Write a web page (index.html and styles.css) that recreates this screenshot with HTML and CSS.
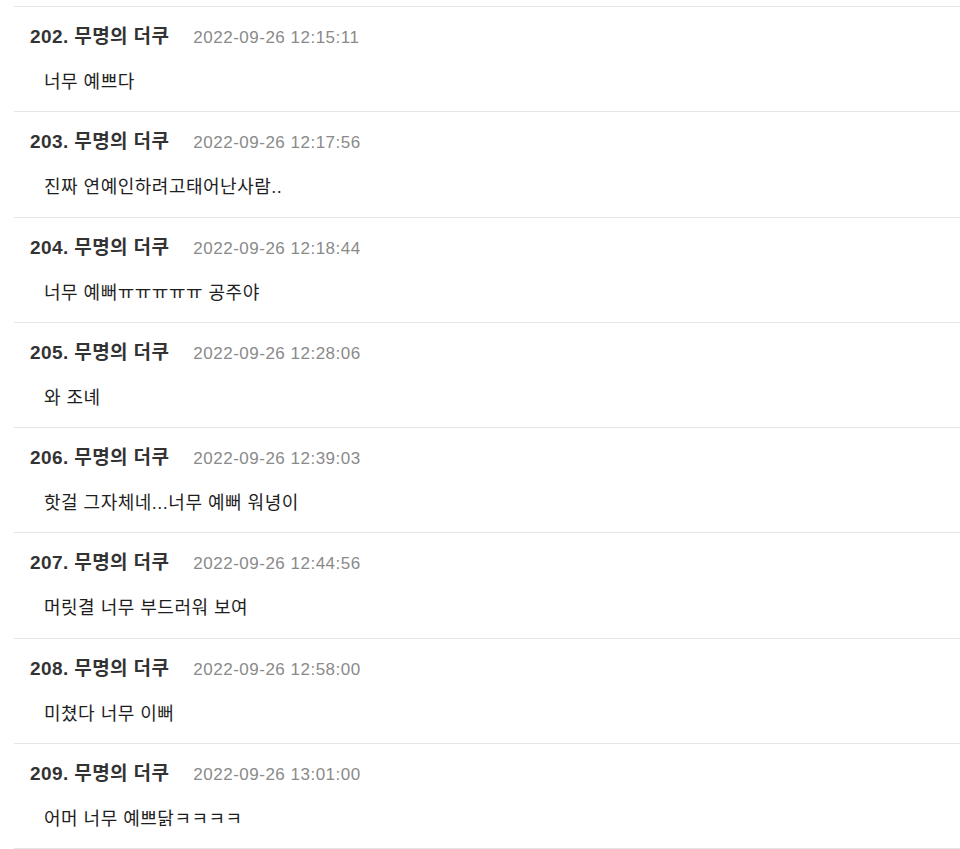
FILE: index.html
```html
<!DOCTYPE html>
<html lang="ko">
<head>
<meta charset="utf-8">
<link rel="stylesheet" href="styles.css">
</head>
<body>
<ul class="comments">
  <li class="comment">
    <div class="meta"><span class="author">202. 무명의 더쿠</span><span class="date">2022-09-26 12:15:11</span></div>
    <p class="text">너무 예쁘다</p>
  </li>
  <li class="comment">
    <div class="meta"><span class="author">203. 무명의 더쿠</span><span class="date">2022-09-26 12:17:56</span></div>
    <p class="text">진짜 연예인하려고태어난사람..</p>
  </li>
  <li class="comment">
    <div class="meta"><span class="author">204. 무명의 더쿠</span><span class="date">2022-09-26 12:18:44</span></div>
    <p class="text">너무 예뻐ㅠㅠㅠㅠㅠ 공주야</p>
  </li>
  <li class="comment">
    <div class="meta"><span class="author">205. 무명의 더쿠</span><span class="date">2022-09-26 12:28:06</span></div>
    <p class="text">와 조녜</p>
  </li>
  <li class="comment">
    <div class="meta"><span class="author">206. 무명의 더쿠</span><span class="date">2022-09-26 12:39:03</span></div>
    <p class="text">핫걸 그자체네...너무 예뻐 워녕이</p>
  </li>
  <li class="comment">
    <div class="meta"><span class="author">207. 무명의 더쿠</span><span class="date">2022-09-26 12:44:56</span></div>
    <p class="text">머릿결 너무 부드러워 보여</p>
  </li>
  <li class="comment">
    <div class="meta"><span class="author">208. 무명의 더쿠</span><span class="date">2022-09-26 12:58:00</span></div>
    <p class="text">미쳤다 너무 이뻐</p>
  </li>
  <li class="comment">
    <div class="meta"><span class="author">209. 무명의 더쿠</span><span class="date">2022-09-26 13:01:00</span></div>
    <p class="text">어머 너무 예쁘닭ㅋㅋㅋㅋ</p>
  </li>
</ul>
</body>
</html>
```
FILE: styles.css
```css
html, body {
  margin: 0;
  padding: 0;
  background: #ffffff;
}
body {
  font-family: "Liberation Sans", "Noto Sans CJK KR", sans-serif;
  color: #222222;
}
.comments {
  list-style: none;
  margin: 6px 0 0 14px;
  padding: 0;
  border-bottom: 1px solid #e6e6e6;
}
.comment {
  border-top: 1px solid #e6e6e6;
  padding: 17px 0 16.3px 16px;
}
.meta {
  display: flex;
  align-items: baseline;
  gap: 24px;
  height: 26px;
  line-height: 26px;
}
.author {
  font-size: 19px;
  font-weight: bold;
  letter-spacing: 0.4px;
  color: #333333;
}
.date {
  font-size: 17px;
  letter-spacing: 0.5px;
  color: #8a8a8a;
}
.text {
  margin: 19px 0 0 14px;
  font-size: 18px;
  line-height: 26px;
  letter-spacing: 0.5px;
  color: #1e1e1e;
}
```
